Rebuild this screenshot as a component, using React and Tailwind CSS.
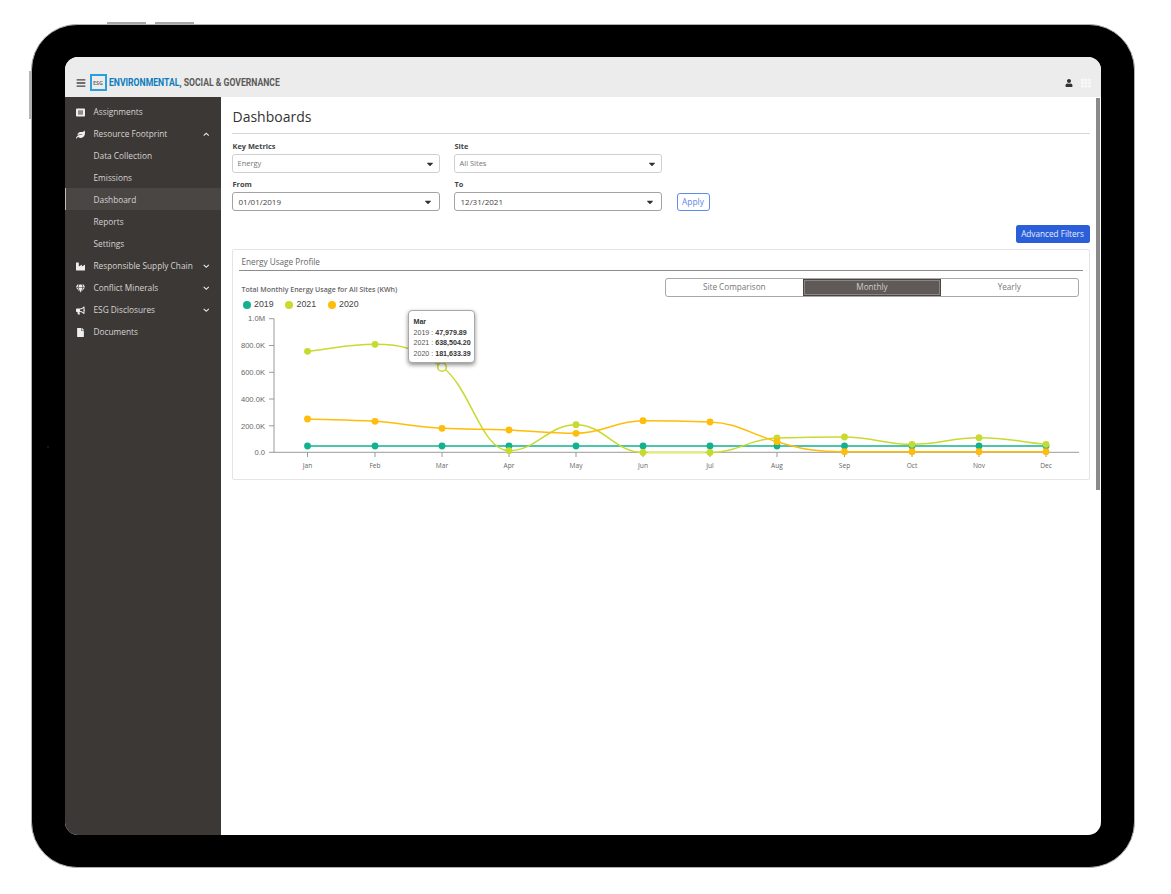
import React from "react";
import {
  FaBars,
  FaBullhorn,
  FaCaretDown,
  FaChevronDown,
  FaChevronUp,
  FaFile,
  FaGem,
  FaIndustry,
  FaLeaf,
  FaTh,
  FaUser,
} from "react-icons/fa";

const ListIcon = ({ className }) => (
  <svg viewBox="0 0 9 9" className={className}>
    <rect x="0" y="0.5" width="9" height="8" rx="0.8" fill="#eeeeee" />
    <rect x="2" y="2.3" width="5" height="4.4" fill="#8f8c8a" />
  </svg>
);

const nav = [
  { label: "Assignments", icon: ListIcon },
  { label: "Resource Footprint", icon: FaLeaf, chevron: "up" },
  { label: "Data Collection" },
  { label: "Emissions" },
  { label: "Dashboard", active: true },
  { label: "Reports" },
  { label: "Settings" },
  { label: "Responsible Supply Chain", icon: FaIndustry, chevron: "down" },
  { label: "Conflict Minerals", icon: FaGem, chevron: "down" },
  { label: "ESG Disclosures", icon: FaBullhorn, chevron: "down" },
  { label: "Documents", icon: FaFile },
];

const months = ["Jan", "Feb", "Mar", "Apr", "May", "Jun", "Jul", "Aug", "Sep", "Oct", "Nov", "Dec"];
const monthX = [307.5, 375, 442, 509, 576, 643, 710, 777, 844.5, 912, 979, 1046];
const yTicks = [
  ["1.0M", 318.7],
  ["800.0K", 345.5],
  ["600.0K", 372.3],
  ["400.0K", 399],
  ["200.0K", 425.8],
  ["0.0", 452.3],
];

const series = [
  { name: "2019", color: "#12b28f", ys: [446, 446, 446, 446, 446, 446, 446, 446, 446, 446, 446, 446] },
  { name: "2021", color: "#c8da2f", ys: [351.3, 344.3, 367, 450.7, 424.7, 452.5, 452.5, 438, 437, 444.3, 437.7, 444.3] },
  { name: "2020", color: "#ffbc0a", ys: [419, 421.3, 428.3, 430, 433.3, 420.7, 422, 441.7, 451.7, 451.7, 451.7, 451.7] },
];

// monotone curve through the points
const curve = (xs, ys) => {
  const n = xs.length;
  const s = [];
  for (let i = 0; i < n - 1; i++) s.push((ys[i + 1] - ys[i]) / (xs[i + 1] - xs[i]));
  const m = [s[0]];
  for (let i = 1; i < n - 1; i++) {
    if (s[i - 1] * s[i] <= 0) m.push(0);
    else {
      const h0 = xs[i] - xs[i - 1];
      const h1 = xs[i + 1] - xs[i];
      const p = (s[i - 1] * h1 + s[i] * h0) / (h0 + h1);
      m.push(Math.sign(p) * 2 * Math.min(Math.abs(s[i - 1]), Math.abs(s[i]), Math.abs(p) * 0.75));
    }
  }
  m.push(s[n - 2]);
  let d = `M${xs[0]},${ys[0]}`;
  for (let i = 0; i < n - 1; i++) {
    const h = (xs[i + 1] - xs[i]) / 2.4;
    d += `C${xs[i] + h},${ys[i] + m[i] * h} ${xs[i + 1] - h},${ys[i + 1] - m[i + 1] * h} ${xs[i + 1]},${ys[i + 1]}`;
  }
  return d;
};

const Select = ({ value, dark }) => (
  <div
    className={
      dark
        ? "w-[208px] h-[19px] flex items-center justify-between pl-[6px] pr-[6px] rounded-[3px] border-[1.5px] border-[#a3a3a3] text-[8px] text-[#444]"
        : "w-[208px] h-[19px] flex items-center justify-between pl-[5px] pr-[4px] rounded-[3px] border border-[#cfcfcf] text-[7.5px] text-[#777]"
    }
  >
    <span>{value}</span>
    <FaCaretDown className="text-[10px] text-[#333]" />
  </div>
);

const Label = ({ children }) => (
  <div className="h-[12px] leading-[12px] pl-px text-[7.4px] font-bold text-[#444]">{children}</div>
);

const Chart = () => (
  <div className="relative">
    <svg viewBox="233 312 856 167" className="block w-[856px] h-[167px]">
      <path d="M274,318.7V452.3H1079" fill="none" stroke="#9a9a9a" strokeWidth="1" />
      {yTicks.map(([label, y]) => (
        <g key={label}>
          <path d={`M269,${y}H274`} stroke="#9a9a9a" strokeWidth="1" />
          <text x="265" y={y + 2.7} textAnchor="end" fontSize="7.6" fill="#666" fontFamily="Liberation Sans, sans-serif">
            {label}
          </text>
        </g>
      ))}
      {months.map((m, i) => (
        <g key={m}>
          <path d={`M${monthX[i]},452.3V457`} stroke="#9a9a9a" strokeWidth="1" />
          <text x={monthX[i]} y="468.2" textAnchor="middle" fontSize="6.6" fill="#666" fontFamily="Open Sans, sans-serif">
            {m}
          </text>
        </g>
      ))}
      {series.map((s) => (
        <path key={s.name} d={curve(monthX, s.ys)} fill="none" stroke={s.color} strokeWidth="1.5" />
      ))}
      <path d="M648,452.5H705" stroke="#e6ec74" strokeWidth="1.5" />
      {series.map((s) =>
        s.ys.map((y, i) => {
          if (s.name === "2021" && i === 2) {
            return <circle key={i} cx={monthX[i]} cy={y} r="4.3" fill="#fff" stroke={s.color} strokeWidth="1.6" />;
          }
          return <circle key={s.name + i} cx={monthX[i]} cy={y} r="3.4" fill={s.color} />;
        })
      )}
    </svg>
    {/* tooltip */}
    <div className="absolute left-[175px] top-[-2px] w-[67px] h-[53px] rounded-[4px] border border-[#a8a8a8] bg-white shadow-[0_2px_4px_rgba(0,0,0,0.45)] pl-[5px] pt-[6px] font-['Liberation_Sans',sans-serif] text-[7.1px] leading-[10.5px] text-[#555]">
      <div className="font-bold text-[#333]">Mar</div>
      <div>2019 : <span className="font-bold text-[#333]">47,979.89</span></div>
      <div>2021 : <span className="font-bold text-[#333]">638,504.20</span></div>
      <div>2020 : <span className="font-bold text-[#333]">181,633.39</span></div>
    </div>
  </div>
);

const App = () => {
  return (
    <div className="relative w-[1171px] h-[894px] bg-white pt-[24px] pl-[31px] font-['Open_Sans',sans-serif] overflow-hidden">
      {/* device buttons */}
      <div className="absolute left-[107px] top-[22px] w-[39px] h-[2px] bg-[#a8a8a8]" />
      <div className="absolute left-[155px] top-[22px] w-[39px] h-[2px] bg-[#a8a8a8]" />
      <div className="absolute left-[29px] top-[71px] w-[2px] h-[48px] bg-[#b5b5b5]" />
      <div className="absolute left-[47px] top-[446px] w-[2px] h-[2px] rounded-full bg-[#0c1a3a]" />

      <div className="w-[1104px] h-[844px] rounded-[46px] border-[1.5px] border-[#b0b0b0] bg-black pt-[31.5px] pl-[32.5px]">
        <div className="w-[1036px] h-[778px] rounded-[13px] overflow-hidden flex flex-col bg-white">
          {/* header */}
          <header className="h-[40px] shrink-0 bg-[#ececec] flex items-center pt-[12.5px] pl-[11px] pr-[10px]">
            <FaBars className="text-[10px] text-[#444]" />
            <div className="ml-[4px] w-[17px] h-[17px] border-[2px] border-[#2a9fdc] flex items-center justify-center text-[5.5px] font-bold text-[#777]">
              ESG
            </div>
            <div className="ml-[2.5px] origin-left scale-x-[0.75] font-['Roboto',sans-serif] font-bold text-[11.5px] text-[#5a5a5a] whitespace-nowrap">
              <span className="text-[#0b7cbc]">ENVIRONMENTAL</span>, SOCIAL &amp; GOVERNANCE
            </div>
            <div className="ml-auto flex items-center gap-[8px]">
              <FaUser className="text-[8px] text-[#333]" />
              <FaTh className="text-[10px] text-[#f8f8f8]" />
            </div>
          </header>

          <div className="flex-1 flex min-h-0">
            {/* sidebar */}
            <aside className="w-[156px] shrink-0 bg-[#3c3836] pt-[3px] text-[8.3px] text-[#d6d4d3]">
              {nav.map((item) => {
                const Icon = item.icon;
                return (
                  <div
                    key={item.label}
                    className={
                      item.active
                        ? "h-[22px] flex items-center border-l border-[#bdbbba] bg-[#4a4644] pl-[27px] pt-[3px]"
                        : "h-[22px] flex items-center pl-[11px] pr-[11px] pt-[3px]"
                    }
                  >
                    {Icon && <Icon className="w-[9px] h-[9px] text-[#eeeeee] mr-[9px] shrink-0" />}
                    {!Icon && !item.active && <span className="w-[18px] shrink-0" />}
                    <span className={item.active ? "ml-px" : ""}>{item.label}</span>
                    {item.chevron === "up" && <FaChevronUp className="ml-auto text-[6.5px] text-[#eeeeee]" />}
                    {item.chevron === "down" && <FaChevronDown className="ml-auto text-[6.5px] text-[#eeeeee]" />}
                  </div>
                );
              })}
            </aside>

            {/* main */}
            <main className="flex-1 flex min-w-0">
              <div className="flex-1 min-w-0 pl-[11px] pr-[6px] pt-[10px]">
                <div className="pb-[6px] pl-px border-b-[1.5px] border-[#d8d8d8]">
                  <h1 className="h-[20px] leading-[20px] text-[14px] text-[#333]">Dashboards</h1>
                </div>

                <div className="mt-[6px] flex gap-[14px]">
                  <div>
                    <Label>Key Metrics</Label>
                    <div className="mt-[2.5px]">
                      <Select value="Energy" />
                    </div>
                  </div>
                  <div>
                    <Label>Site</Label>
                    <div className="mt-[2.5px]">
                      <Select value="All Sites" />
                    </div>
                  </div>
                </div>

                <div className="mt-[4.5px] flex gap-[14px] items-end">
                  <div>
                    <Label>From</Label>
                    <div className="mt-[2.5px]">
                      <Select value="01/01/2019" dark />
                    </div>
                  </div>
                  <div>
                    <Label>To</Label>
                    <div className="mt-[2.5px]">
                      <Select value="12/31/2021" dark />
                    </div>
                  </div>
                  <button className="ml-px w-[33px] h-[18.5px] pt-px rounded-[3px] border border-[#5f8aee] text-[8.4px] text-[#5b86e8] bg-white">
                    Apply
                  </button>
                </div>

                <div className="mt-[14px] flex justify-end">
                  <button className="w-[74px] h-[18px] rounded-[2.5px] bg-[#2b5fd9] text-[8.2px] text-[#e8eefc]">
                    Advanced Filters
                  </button>
                </div>

                {/* card */}
                <section className="mt-[6px] h-[231px] rounded-[2px] border border-[#e4e4e4]">
                  <div className="mx-[6px] h-[21px] pl-[3px] pt-[5px] border-b border-[#8c8c8c] flex items-center text-[8.2px] text-[#666]">
                    Energy Usage Profile
                  </div>
                  <div className="flex justify-between pl-[9px] pr-[10px]">
                    <div className="pt-[13px]">
                      <div className="h-[12px] leading-[12px] text-[7px] font-semibold text-[#666]">
                        Total Monthly Energy Usage for All Sites (KWh)
                      </div>
                      <div className="mt-[3px] h-[12px] flex items-center font-['Liberation_Sans',sans-serif] text-[8.8px] text-[#444]">
                        {series.map((s) => (
                          <div key={s.name} className="flex items-center w-[42.5px]">
                            <span
                              className="w-[8px] h-[8px] rounded-full ml-px mr-[3.5px]"
                              style={{ backgroundColor: s.color }}
                            />
                            {s.name}
                          </div>
                        ))}
                      </div>
                    </div>
                    <div className="mt-[6.5px] w-[414px] h-[19px] flex rounded-[3px] border-[1.5px] border-[#a8a8a8] text-[8.2px] text-[#777]">
                      <div className="w-[137.5px] flex items-center justify-center">Site Comparison</div>
                      <div className="w-[138px] bg-[#5f5a58] border-[1.5px] border-[#4b4644] text-[#cfcdcc]">
                        <div className="h-full flex items-center justify-center border border-[#8a8683]">Monthly</div>
                      </div>
                      <div className="flex-1 flex items-center justify-center">Yearly</div>
                    </div>
                  </div>
                  <div className="mt-px">
                    <Chart />
                  </div>
                </section>
              </div>

              {/* scrollbar */}
              <div className="w-[4px] mr-px h-[392px] mt-px bg-[#8a8a8a]" />
            </main>
          </div>
        </div>
      </div>
    </div>
  );
};

export default App;
